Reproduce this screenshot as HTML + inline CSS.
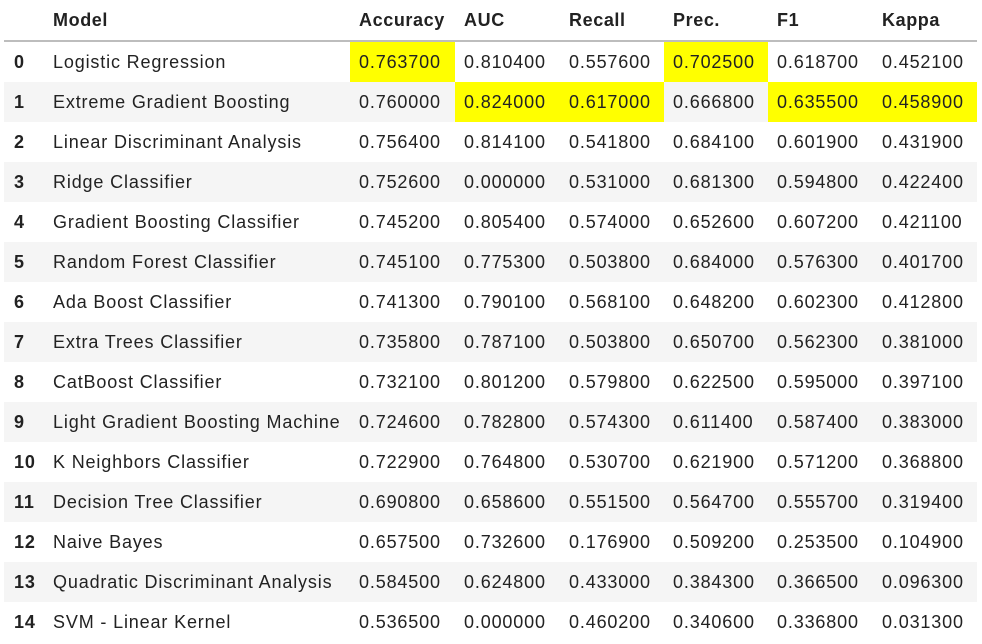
<!DOCTYPE html>
<html><head><meta charset="utf-8"><style>
html,body{margin:0;padding:0;background:#fff;width:982px;height:644px;overflow:hidden}
table{position:absolute;left:4px;top:0;border-collapse:collapse;table-layout:fixed;font-family:"Liberation Sans",Arial,sans-serif;font-size:18px;color:#222;letter-spacing:0.85px}
td,th{height:40px;padding:0 0 0 9px;text-align:left;white-space:nowrap;overflow:hidden}
thead th{height:40px;border-bottom:2px solid #bdbdbd;font-weight:bold;vertical-align:middle;padding-top:0;letter-spacing:0.6px}
tbody th{font-weight:bold;padding-left:10px}
tbody tr:nth-child(even){background:#f5f5f5}
.y{background:#ffff00}
</style></head><body>
<table>
<colgroup><col style="width:40px"><col style="width:306px"><col style="width:105px"><col style="width:105px"><col style="width:104px"><col style="width:104px"><col style="width:105px"><col style="width:104px"></colgroup>
<thead><tr><th></th><th>Model</th><th>Accuracy</th><th>AUC</th><th>Recall</th><th>Prec.</th><th>F1</th><th>Kappa</th></tr></thead>
<tbody>
<tr><th>0</th><td>Logistic Regression</td><td class="y">0.763700</td><td>0.810400</td><td>0.557600</td><td class="y">0.702500</td><td>0.618700</td><td>0.452100</td></tr>
<tr><th>1</th><td>Extreme Gradient Boosting</td><td>0.760000</td><td class="y">0.824000</td><td class="y">0.617000</td><td>0.666800</td><td class="y">0.635500</td><td class="y">0.458900</td></tr>
<tr><th>2</th><td>Linear Discriminant Analysis</td><td>0.756400</td><td>0.814100</td><td>0.541800</td><td>0.684100</td><td>0.601900</td><td>0.431900</td></tr>
<tr><th>3</th><td>Ridge Classifier</td><td>0.752600</td><td>0.000000</td><td>0.531000</td><td>0.681300</td><td>0.594800</td><td>0.422400</td></tr>
<tr><th>4</th><td>Gradient Boosting Classifier</td><td>0.745200</td><td>0.805400</td><td>0.574000</td><td>0.652600</td><td>0.607200</td><td>0.421100</td></tr>
<tr><th>5</th><td>Random Forest Classifier</td><td>0.745100</td><td>0.775300</td><td>0.503800</td><td>0.684000</td><td>0.576300</td><td>0.401700</td></tr>
<tr><th>6</th><td>Ada Boost Classifier</td><td>0.741300</td><td>0.790100</td><td>0.568100</td><td>0.648200</td><td>0.602300</td><td>0.412800</td></tr>
<tr><th>7</th><td>Extra Trees Classifier</td><td>0.735800</td><td>0.787100</td><td>0.503800</td><td>0.650700</td><td>0.562300</td><td>0.381000</td></tr>
<tr><th>8</th><td>CatBoost Classifier</td><td>0.732100</td><td>0.801200</td><td>0.579800</td><td>0.622500</td><td>0.595000</td><td>0.397100</td></tr>
<tr><th>9</th><td>Light Gradient Boosting Machine</td><td>0.724600</td><td>0.782800</td><td>0.574300</td><td>0.611400</td><td>0.587400</td><td>0.383000</td></tr>
<tr><th>10</th><td>K Neighbors Classifier</td><td>0.722900</td><td>0.764800</td><td>0.530700</td><td>0.621900</td><td>0.571200</td><td>0.368800</td></tr>
<tr><th>11</th><td>Decision Tree Classifier</td><td>0.690800</td><td>0.658600</td><td>0.551500</td><td>0.564700</td><td>0.555700</td><td>0.319400</td></tr>
<tr><th>12</th><td>Naive Bayes</td><td>0.657500</td><td>0.732600</td><td>0.176900</td><td>0.509200</td><td>0.253500</td><td>0.104900</td></tr>
<tr><th>13</th><td>Quadratic Discriminant Analysis</td><td>0.584500</td><td>0.624800</td><td>0.433000</td><td>0.384300</td><td>0.366500</td><td>0.096300</td></tr>
<tr><th>14</th><td>SVM - Linear Kernel</td><td>0.536500</td><td>0.000000</td><td>0.460200</td><td>0.340600</td><td>0.336800</td><td>0.031300</td></tr>
</tbody></table>
</body></html>
